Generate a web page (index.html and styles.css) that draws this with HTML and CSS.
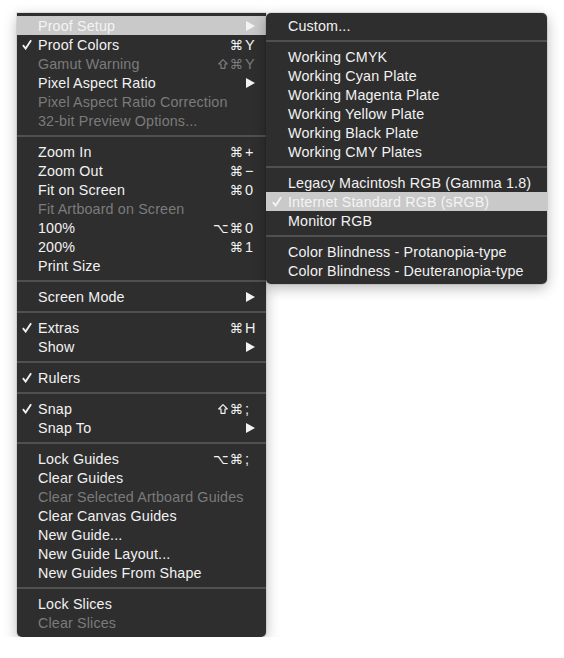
FILE: index.html
```html
<!DOCTYPE html>
<html lang="en">
<head>
    <meta charset="UTF-8">
    <title>View Menu</title>
    <link rel="stylesheet" href="styles.css">
</head>
<body>
    <div class="stage">
        <div class="menu main-menu">
            <div class="item active"><span class="check"></span><span class="label">Proof Setup</span><span class="arrow"></span></div>
            <div class="item"><span class="check"><svg viewBox="0 0 11 11"><path d="M1 6.2 L4 10 L10 0.8"/></svg></span><span class="label">Proof Colors</span><span class="mods">⌘</span><span class="key">Y</span></div>
            <div class="item disabled"><span class="check"></span><span class="label">Gamut Warning</span><span class="mods"><svg class="shift" viewBox="0 0 10 10"><path d="M5 0.7 L9.3 5 L7 5 L7 9.3 L3 9.3 L3 5 L0.7 5 Z"/></svg>⌘</span><span class="key">Y</span></div>
            <div class="item"><span class="check"></span><span class="label">Pixel Aspect Ratio</span><span class="arrow"></span></div>
            <div class="item disabled"><span class="check"></span><span class="label">Pixel Aspect Ratio Correction</span></div>
            <div class="item disabled"><span class="check"></span><span class="label">32-bit Preview Options...</span></div>
            <div class="sep"></div>
            <div class="item"><span class="check"></span><span class="label">Zoom In</span><span class="mods">⌘</span><span class="key">+</span></div>
            <div class="item"><span class="check"></span><span class="label">Zoom Out</span><span class="mods">⌘</span><span class="key">−</span></div>
            <div class="item"><span class="check"></span><span class="label">Fit on Screen</span><span class="mods">⌘</span><span class="key">0</span></div>
            <div class="item disabled"><span class="check"></span><span class="label">Fit Artboard on Screen</span></div>
            <div class="item"><span class="check"></span><span class="label">100%</span><span class="mods">⌥⌘</span><span class="key">0</span></div>
            <div class="item"><span class="check"></span><span class="label">200%</span><span class="mods">⌘</span><span class="key">1</span></div>
            <div class="item"><span class="check"></span><span class="label">Print Size</span></div>
            <div class="sep"></div>
            <div class="item"><span class="check"></span><span class="label">Screen Mode</span><span class="arrow"></span></div>
            <div class="sep"></div>
            <div class="item"><span class="check"><svg viewBox="0 0 11 11"><path d="M1 6.2 L4 10 L10 0.8"/></svg></span><span class="label">Extras</span><span class="mods">⌘</span><span class="key">H</span></div>
            <div class="item"><span class="check"></span><span class="label">Show</span><span class="arrow"></span></div>
            <div class="sep"></div>
            <div class="item"><span class="check"><svg viewBox="0 0 11 11"><path d="M1 6.2 L4 10 L10 0.8"/></svg></span><span class="label">Rulers</span></div>
            <div class="sep"></div>
            <div class="item"><span class="check"><svg viewBox="0 0 11 11"><path d="M1 6.2 L4 10 L10 0.8"/></svg></span><span class="label">Snap</span><span class="mods"><svg class="shift" viewBox="0 0 10 10"><path d="M5 0.7 L9.3 5 L7 5 L7 9.3 L3 9.3 L3 5 L0.7 5 Z"/></svg>⌘</span><span class="key">;</span></div>
            <div class="item"><span class="check"></span><span class="label">Snap To</span><span class="arrow"></span></div>
            <div class="sep"></div>
            <div class="item"><span class="check"></span><span class="label">Lock Guides</span><span class="mods">⌥⌘</span><span class="key">;</span></div>
            <div class="item"><span class="check"></span><span class="label">Clear Guides</span></div>
            <div class="item disabled"><span class="check"></span><span class="label">Clear Selected Artboard Guides</span></div>
            <div class="item"><span class="check"></span><span class="label">Clear Canvas Guides</span></div>
            <div class="item"><span class="check"></span><span class="label">New Guide...</span></div>
            <div class="item"><span class="check"></span><span class="label">New Guide Layout...</span></div>
            <div class="item"><span class="check"></span><span class="label">New Guides From Shape</span></div>
            <div class="sep"></div>
            <div class="item"><span class="check"></span><span class="label">Lock Slices</span></div>
            <div class="item disabled"><span class="check"></span><span class="label">Clear Slices</span></div>
        </div>

        <div class="menu sub-menu">
            <div class="item"><span class="check"></span><span class="label">Custom...</span></div>
            <div class="sep"></div>
            <div class="item"><span class="check"></span><span class="label">Working CMYK</span></div>
            <div class="item"><span class="check"></span><span class="label">Working Cyan Plate</span></div>
            <div class="item"><span class="check"></span><span class="label">Working Magenta Plate</span></div>
            <div class="item"><span class="check"></span><span class="label">Working Yellow Plate</span></div>
            <div class="item"><span class="check"></span><span class="label">Working Black Plate</span></div>
            <div class="item"><span class="check"></span><span class="label">Working CMY Plates</span></div>
            <div class="sep"></div>
            <div class="item"><span class="check"></span><span class="label">Legacy Macintosh RGB (Gamma 1.8)</span></div>
            <div class="item active"><span class="check"><svg viewBox="0 0 11 11"><path d="M1 6.2 L4 10 L10 0.8"/></svg></span><span class="label">Internet Standard RGB (sRGB)</span></div>
            <div class="item"><span class="check"></span><span class="label">Monitor RGB</span></div>
            <div class="sep"></div>
            <div class="item"><span class="check"></span><span class="label">Color Blindness - Protanopia-type</span></div>
            <div class="item"><span class="check"></span><span class="label">Color Blindness - Deuteranopia-type</span></div>
        </div>
    </div>
</body>
</html>
```

FILE: styles.css
```css
body {
    margin: 0;
    background: #fff;
    font-family: "Liberation Sans", Arial, sans-serif;
    font-size: 14.3px;
    color: #f2f2f2;
}

.stage {
    display: flex;
    align-items: flex-start;
    padding: 13px 0 0 17px;
}

.menu {
    background: #2e2e2e;
    box-shadow: 0 0 0 1px rgba(0, 0, 0, 0.08), 0 4px 14px rgba(0, 0, 0, 0.28);
}

.main-menu {
    width: 249px;
    padding: 3px 0 5px;
    border-radius: 0 0 5px 5px;
}

.sub-menu {
    width: 281px;
    padding: 3px 0 4px;
    border-radius: 5px;
    position: relative;
    z-index: 1;
}

.item {
    display: flex;
    align-items: center;
    height: 19px;
    line-height: 20px;
    padding-right: 10px;
    white-space: nowrap;
    letter-spacing: 0.15px;
}

.sub-menu .item {
    padding-right: 12px;
}

.item.active {
    background: #c9c9c9;
    color: #f4f4f4;
}

.item.disabled {
    color: #7b7b7b;
}

.check {
    width: 21px;
    flex: none;
    display: flex;
    justify-content: flex-end;
    padding-right: 6px;
    box-sizing: border-box;
}

.sub-menu .check {
    width: 22px;
}

.check svg {
    width: 10px;
    height: 11px;
    fill: none;
    stroke: currentColor;
    stroke-width: 2;
}

.label {
    flex: 1;
}

.mods {
    display: flex;
    align-items: center;
    font-family: "DejaVu Sans", sans-serif;
    font-size: 13.5px;
    letter-spacing: 1px;
}

.shift {
    width: 10px;
    height: 10px;
    margin-right: 2px;
    fill: none;
    stroke: currentColor;
    stroke-width: 1.2;
    stroke-linejoin: round;
}

.key {
    width: 11px;
    margin-left: 1px;
    font-size: 14.5px;
}

.arrow {
    width: 0;
    height: 0;
    margin-right: 1px;
    border-top: 5px solid transparent;
    border-bottom: 5px solid transparent;
    border-left: 9px solid currentColor;
}

.sep {
    height: 2px;
    margin: 5px 0;
    background: #505050;
}
```
